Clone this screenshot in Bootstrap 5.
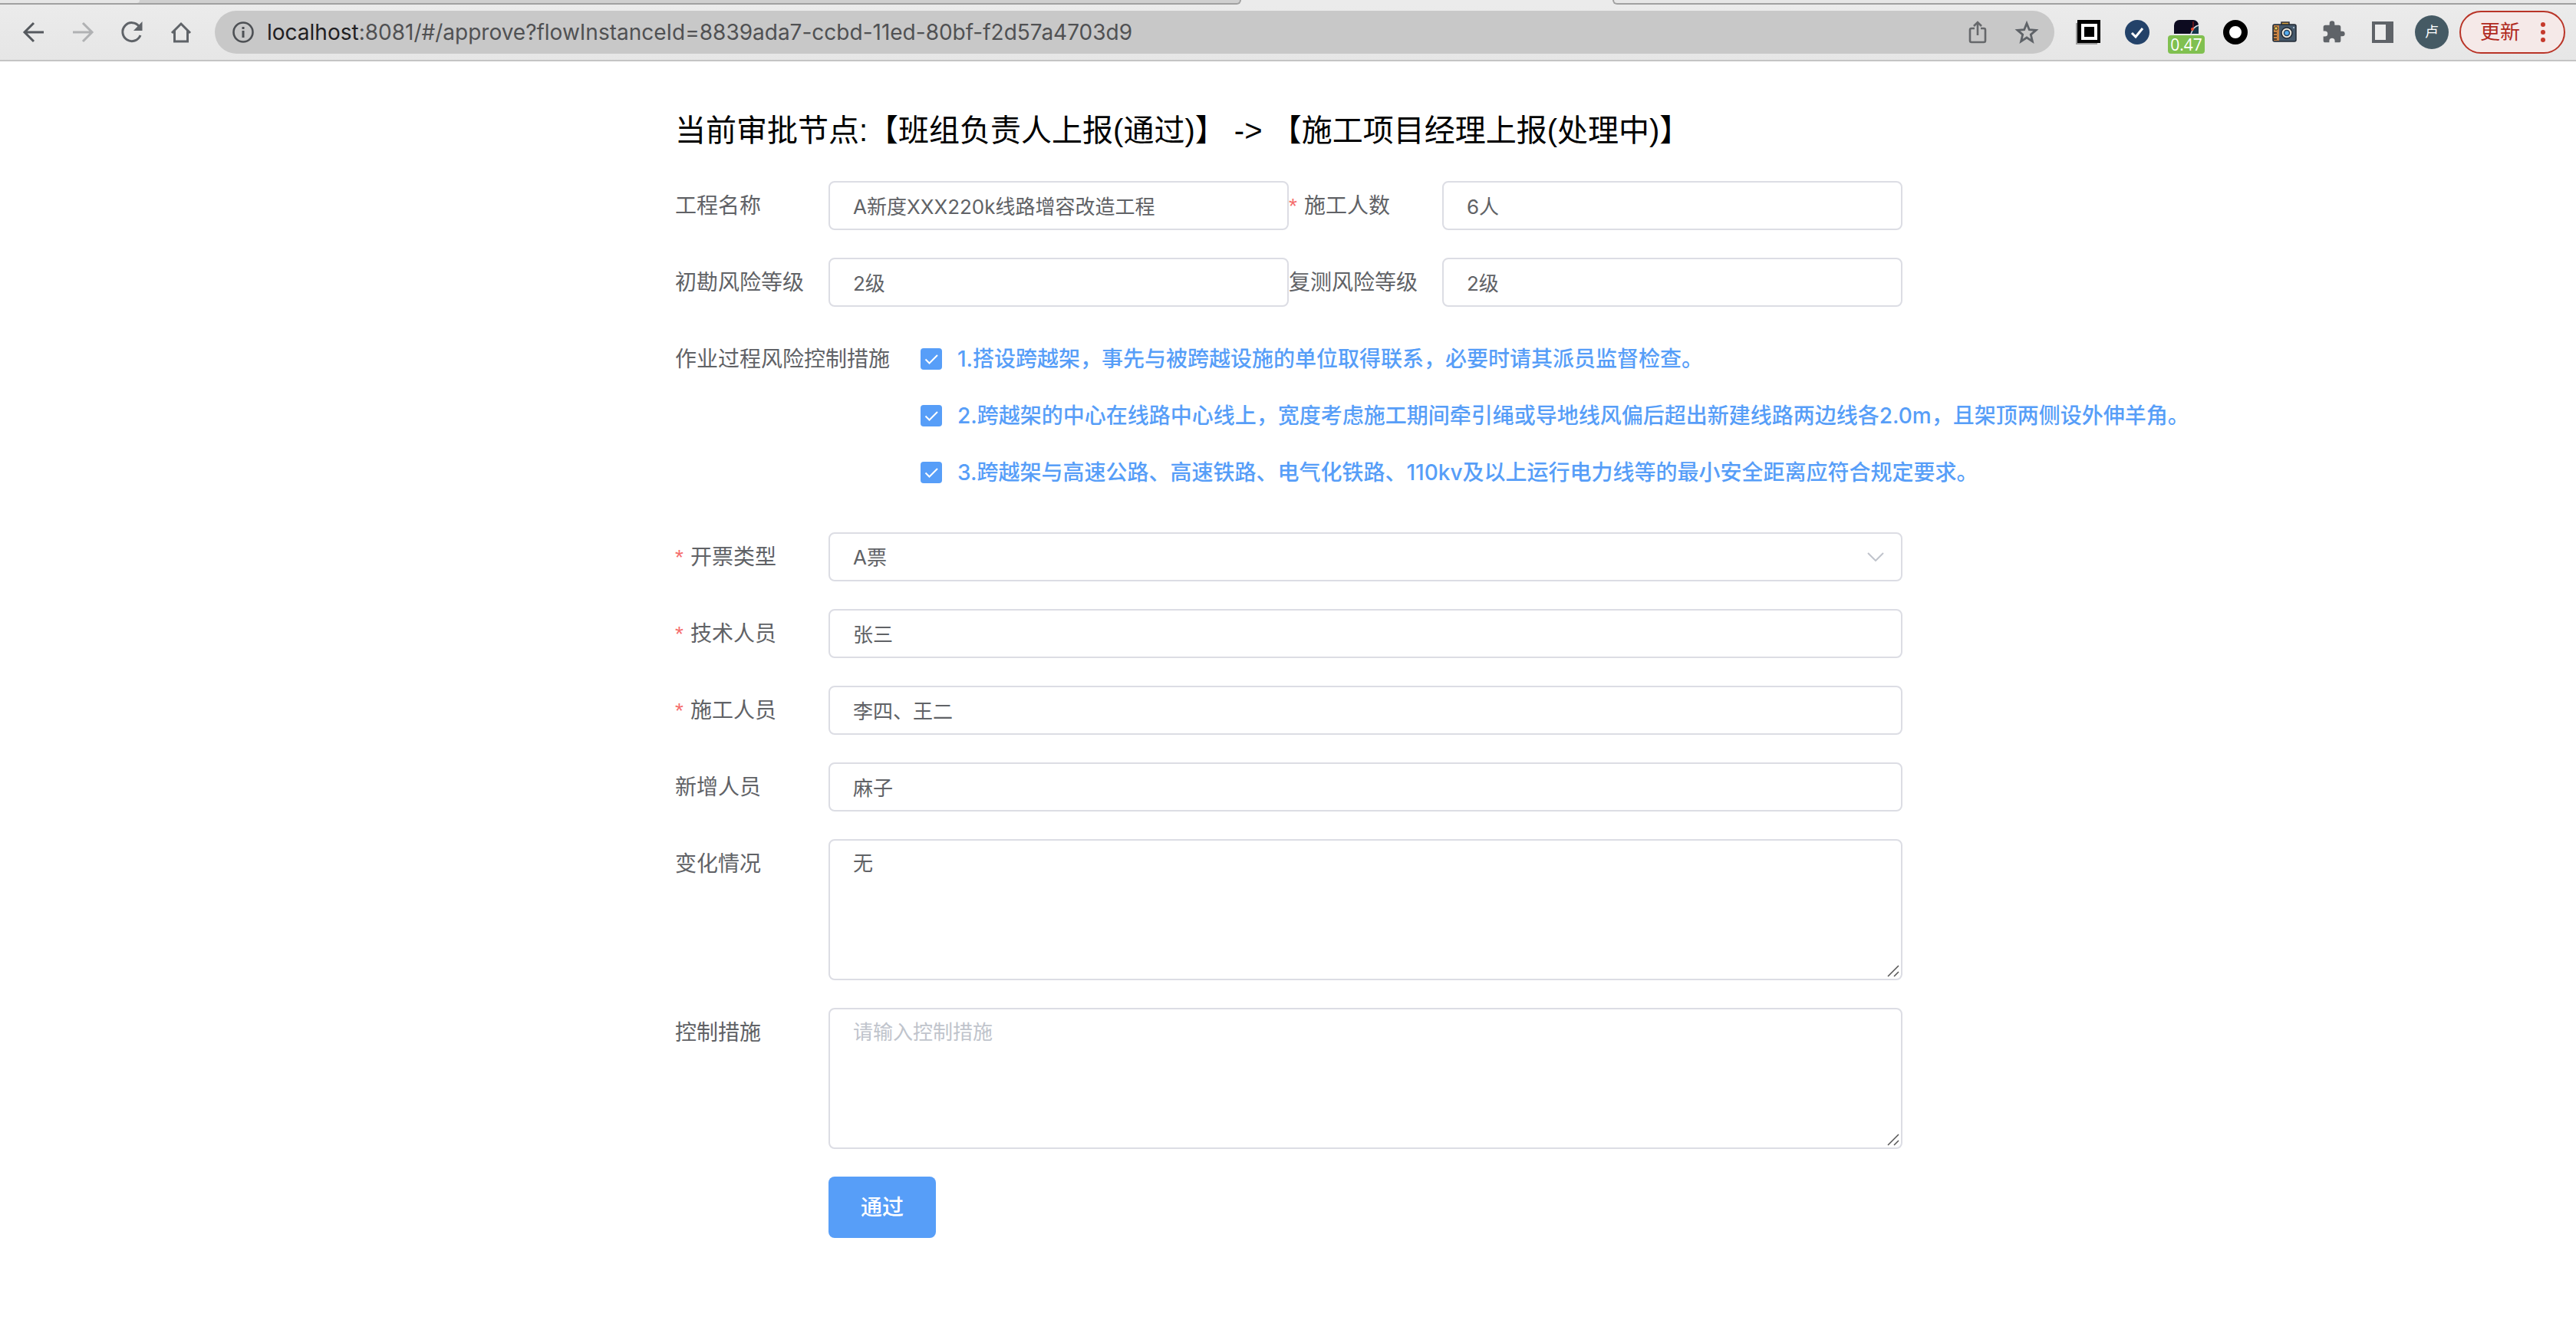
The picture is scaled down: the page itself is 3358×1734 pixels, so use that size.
<!DOCTYPE html>
<html lang="zh-CN">
<head>
<meta charset="utf-8">
<meta name="viewport" content="width=device-width, initial-scale=1">
<title>审批</title>
<link href="https://cdn.jsdelivr.net/npm/bootstrap@5.3.0/dist/css/bootstrap.min.css" rel="stylesheet">
<style>
  body { font-family: Inter, "Noto Sans CJK SC", sans-serif; font-size: 28px; line-height: 64px; color: #606266; background: #fff; }

  /* Browser chrome */
  .tab-strip { height: 6px; background: #ebebeb; }
  .tab-strip > div { flex-basis: 0; }
  .tabs-left { flex-grow: 1618; background: #cfcfcf; border-bottom: 2px solid #a0a0a0; border-right: 2px solid #a0a0a0; border-bottom-right-radius: 8px; }
  .tabs-first { width: 182px; height: 4px; background: #e6e6e6; border-bottom-right-radius: 4px; }
  .tabs-active { flex-grow: 484; }
  .tabs-right { flex-grow: 1256; background: #e6e6e6; border-bottom: 2px solid #a0a0a0; border-left: 2px solid #a0a0a0; border-bottom-left-radius: 8px; }
  .toolbar { height: 74px; padding: 0 14px 0 12px; background: linear-gradient(#ebebeb, #e6e6e6); border-bottom: 2px solid #c4c4c4; }
  .tool-btn { width: 64px; height: 64px; padding: 0; border: 0; background: none; color: #5f6368; display: flex; align-items: center; justify-content: center; flex: none; }
  .tool-btn svg, .omnibox svg { display: block; overflow: visible; }
  .omnibox { height: 56px; margin: 0 12px; padding: 0 4px 0 22px; border-radius: 28px; background: #c8c8c8; }
  .url-text { margin-left: 16px; font-size: 28px; line-height: 40px; color: #505153; white-space: nowrap; }
  .url-text b { font-weight: 400; color: #1f2023; }
  .ext-count { top: 36px; left: 8px; width: 48px; height: 24px; border-radius: 4px; background: #80c050; color: #fff; font: 21px/24px "Open Sans", sans-serif; }
  .avatar { width: 44px; height: 44px; border-radius: 50%; background: #455a64; color: #fff; font-size: 18px; line-height: 44px; }
  .update-btn { width: 138px; height: 56px; margin-left: 4px; padding: 0 24px 0 25px; border: 2px solid #b93427; border-radius: 28px; background: #f5e9e8; color: #b02a1e; font-size: 26px; line-height: 40px; }

  /* Approval form */
  .approve-page { max-width: 1602px; padding: 66px 0 0 2px; }
  .node-title { margin: 0 0 42px; font-family: "Liberation Sans", "Noto Sans CJK SC", sans-serif; font-size: 40px; line-height: 48px; font-weight: 400; color: #000; white-space: nowrap; }
  .field { display: flex; align-items: flex-start; margin-bottom: 36px; }
  .field-label { flex: none; width: 200px; height: 64px; white-space: nowrap; }
  .field-label.wide { width: 320px; }
  .req::before { content: "*"; color: #f56c6c; margin-right: 9px; font-family: "Liberation Sans", sans-serif; line-height: 1; }
  .field .form-control, .field .form-select { height: 64px; padding: 0 30px 2px; border: 2px solid #dcdde4; border-radius: 8px; font-size: 26px; line-height: 39px; color: #606266; background-color: #fff; }
  .field .form-select { padding-bottom: 0; background-image: url("data:image/svg+xml,%3Csvg xmlns='http://www.w3.org/2000/svg' viewBox='0 0 22 12'%3E%3Cpath d='M1 1l10 10L21 1' fill='none' stroke='%23c0c4cc' stroke-width='2'/%3E%3C/svg%3E"); background-size: 22px 12px; background-position: right 22px center; }
  .field textarea.form-control { height: 184px; padding: 10px 30px; resize: none; background: #fff url("data:image/svg+xml,%3Csvg xmlns='http://www.w3.org/2000/svg' viewBox='0 0 16 16'%3E%3Cpath d='M1 15L15 1M9 15l6-6' fill='none' stroke='%23555' stroke-width='1.5'/%3E%3C/svg%3E") no-repeat right 2px bottom 2px / 16px 16px; }
  .field .form-control::placeholder { color: #c0c4cc; opacity: 1; }
  .measure { height: 64px; margin-bottom: 10px; font-weight: 500; color: #579ef8; white-space: nowrap; }
  .measure .form-check-input { flex: none; width: 28px; height: 28px; margin: 0 20px 0 0; border: 0; border-radius: 4px; background-color: #579ef8; background-size: 28px 28px; background-image: url("data:image/svg+xml,%3Csvg xmlns='http://www.w3.org/2000/svg' viewBox='0 0 28 28'%3E%3Cpath d='M6.500 14.500l5 5L22 9' fill='none' stroke='white' stroke-width='2'/%3E%3C/svg%3E"); }
  .pass-btn { width: 140px; height: 80px; padding: 0; border: 0; border-radius: 8px; background: #579ef8; font-size: 28px; font-weight: 500; }
</style>
<script src="https://cdn.jsdelivr.net/npm/bootstrap@5.3.0/dist/js/bootstrap.bundle.min.js"></script>
</head>
<body>
<header>
  <div class="tab-strip d-flex">
    <div class="tabs-left"><div class="tabs-first"></div></div>
    <div class="tabs-active"></div>
    <div class="tabs-right"></div>
  </div>
  <nav class="toolbar d-flex align-items-center">
    <button class="tool-btn" aria-label="后退"><svg width="28" height="28" viewBox="0 0 28 28" fill="none" stroke="#55595e" stroke-width="3"><path d="M27 14H3M14 2L2 14l12 12"/></svg></button>
    <button class="tool-btn" aria-label="前进"><svg width="28" height="28" viewBox="0 0 28 28" fill="none" stroke="#b0b1b3" stroke-width="3"><path d="M1 14h24M14 2l12 12-12 12"/></svg></button>
    <button class="tool-btn" aria-label="刷新"><svg width="28" height="28" viewBox="0 0 28 28"><path d="M23.500 6.500A12 12 0 1 0 25 18" fill="none" stroke="#5f6368" stroke-width="3"/><path d="M27.500 0v12H16z" fill="#5f6368"/></svg></button>
    <button class="tool-btn" aria-label="主页"><svg width="28" height="28" viewBox="0 0 28 28" fill="none" stroke="#5f6368" stroke-width="3"><path d="M2 15L14 3l12 12M5.500 12v14h17V12"/></svg></button>
    <div class="omnibox d-flex align-items-center flex-grow-1">
      <svg width="30" height="30" viewBox="0 0 30 30"><circle cx="15" cy="15" r="12.500" fill="none" stroke="#4d5054" stroke-width="2.600"/><path d="M13.500 8h3v3h-3zM13.500 13h3v9h-3z" fill="#4d5054"/></svg>
      <div class="url-text flex-grow-1" role="textbox" aria-label="地址"><b>localhost</b>:8081/#/approve?flowInstanceId=8839ada7-ccbd-11ed-80bf-f2d57a4703d9</div>
      <button class="tool-btn" aria-label="分享"><svg width="24" height="30" viewBox="0 0 24 30" fill="none" stroke="#66686b" stroke-width="2.600"><path d="M8 10H4a2 2 0 0 0-2 2v14a2 2 0 0 0 2 2h16a2 2 0 0 0 2-2V12a2 2 0 0 0-2-2h-4M12 19V2M7 7l5-5 5 5"/></svg></button>
      <button class="tool-btn" aria-label="收藏"><svg width="30" height="30" viewBox="0 0 30 30" fill="none" stroke="#5f6368" stroke-width="2.800"><path d="M15 3.500l3.300 8.200 8.700.7-6.700 5.700 2.100 8.700L15 22l-7.400 4.800 2.100-8.700L3 12.400l8.700-.7z"/></svg></button>
    </div>
    <button class="tool-btn" aria-label="扩展 1"><svg width="32" height="32" viewBox="0 0 32 32"><path d="M0 4h28v28H0z" fill="#9a9a9a"/><path d="M2 0h30v30H2z" fill="#000"/><path d="M7 5h21v21H7z" fill="#fff"/><path d="M11 9h13v13H11z" fill="#000"/></svg></button>
    <button class="tool-btn" aria-label="扩展 2"><svg width="32" height="32" viewBox="0 0 32 32"><circle cx="16" cy="16" r="16" fill="#234269"/><path d="M9 17l5 5 9-11" fill="none" stroke="#fff" stroke-width="3"/></svg></button>
    <button class="tool-btn position-relative" aria-label="扩展 3"><svg width="32" height="32" viewBox="0 0 32 32"><path d="M0 18V7a7 7 0 0 1 7-7h18a7 7 0 0 1 7 7v11z" fill="#0d0b20"/><path d="M25 2v10" stroke="#7c1d1d" stroke-width="1.500"/><path d="M22 18c2-6 5-10 10-11v11z" fill="#14364a"/><path d="M22 18c2-6 5-10 10-11" fill="none" stroke="#d9dde2" stroke-width="1.500"/><circle cx="24" cy="12" r="2" fill="#f04a2c"/></svg><span class="ext-count position-absolute">0.47</span></button>
    <button class="tool-btn" aria-label="扩展 4"><svg width="32" height="32" viewBox="0 0 32 32"><circle cx="16" cy="16" r="12" fill="#fff" stroke="#000" stroke-width="8"/></svg></button>
    <button class="tool-btn" aria-label="扩展 5"><svg width="32" height="28" viewBox="0 0 32 28"><path d="M12 4V1h10v3" fill="#d9a441" stroke="#2b2b33" stroke-width="1.500"/><rect x="1" y="4" width="30" height="22" rx="2" fill="#45596b" stroke="#222a35" stroke-width="1.500"/><path d="M2 5h7v20H2z" fill="#c98343"/><path d="M2 15h4M2 19h4M2 23h4" stroke="#222" stroke-width="1.500"/><circle cx="5" cy="9" r="2.200" fill="#f4d45c" stroke="#222"/><circle cx="19" cy="15" r="7" fill="#efe9dc" stroke="#222a35" stroke-width="1.500"/><circle cx="19" cy="15" r="3.500" fill="#55aef0" stroke="#25405c" stroke-width="1.500"/><circle cx="28" cy="8" r="1" fill="#bcd"/></svg></button>
    <button class="tool-btn" aria-label="扩展程序"><svg width="32" height="32" viewBox="0 0 24 24" fill="#5f6368"><path d="M20.500 11H19V7a2 2 0 0 0-2-2h-4V3.500a2.500 2.500 0 0 0-5 0V5H4a2 2 0 0 0-2 2v3.800h1.500a2.700 2.700 0 0 1 0 5.400H2V20a2 2 0 0 0 2 2h3.800v-1.500a2.700 2.700 0 0 1 5.400 0V22H17a2 2 0 0 0 2-2v-4h1.500a2.500 2.500 0 0 0 0-5z"/></svg></button>
    <button class="tool-btn" aria-label="侧边栏"><svg width="28" height="28" viewBox="0 0 28 28"><path d="M0 0h28v28H0z" fill="#5f6368"/><path d="M4 4h14v20H4z" fill="#ececec"/></svg></button>
    <button class="tool-btn" aria-label="用户"><span class="avatar">卢</span></button>
    <button class="update-btn d-flex align-items-center justify-content-between">更新<svg width="6" height="28" viewBox="0 0 6 28" fill="#c5392b"><circle cx="3" cy="4" r="3"/><circle cx="3" cy="14" r="3"/><circle cx="3" cy="24" r="3"/></svg></button>
  </nav>
</header>

<main class="approve-page mx-auto">
  <h1 class="node-title">当前审批节点:【班组负责人上报(通过)】 -&gt; 【施工项目经理上报(处理中)】</h1>
  <form>
    <div class="row g-0">
      <div class="col-6 field"><label class="field-label" for="project">工程名称</label><input class="form-control" id="project" value="A新度XXX220k线路增容改造工程"></div>
      <div class="col-6 field"><label class="field-label req" for="count">施工人数</label><input class="form-control" id="count" value="6人"></div>
      <div class="col-6 field"><label class="field-label" for="risk1">初勘风险等级</label><input class="form-control" id="risk1" value="2级"></div>
      <div class="col-6 field"><label class="field-label" for="risk2">复测风险等级</label><input class="form-control" id="risk2" value="2级"></div>
    </div>
    <div class="field" role="group" aria-labelledby="measures">
      <span class="field-label wide" id="measures">作业过程风险控制措施</span>
      <div>
        <div class="measure d-flex align-items-center"><input class="form-check-input" type="checkbox" id="m1" checked><label for="m1">1.搭设跨越架，事先与被跨越设施的单位取得联系，必要时请其派员监督检查。</label></div>
        <div class="measure d-flex align-items-center"><input class="form-check-input" type="checkbox" id="m2" checked><label for="m2">2.跨越架的中心在线路中心线上，宽度考虑施工期间牵引绳或导地线风偏后超出新建线路两边线各2.0m，且架顶两侧设外伸羊角。</label></div>
        <div class="measure d-flex align-items-center"><input class="form-check-input" type="checkbox" id="m3" checked><label for="m3">3.跨越架与高速公路、高速铁路、电气化铁路、110kv及以上运行电力线等的最小安全距离应符合规定要求。</label></div>
      </div>
    </div>
    <div class="field"><label class="field-label req" for="ticket">开票类型</label><select class="form-select" id="ticket"><option>A票</option></select></div>
    <div class="field"><label class="field-label req" for="tech">技术人员</label><input class="form-control" id="tech" value="张三"></div>
    <div class="field"><label class="field-label req" for="worker">施工人员</label><input class="form-control" id="worker" value="李四、王二"></div>
    <div class="field"><label class="field-label" for="added">新增人员</label><input class="form-control" id="added" value="麻子"></div>
    <div class="field"><label class="field-label" for="change">变化情况</label><textarea class="form-control" id="change">无</textarea></div>
    <div class="field"><label class="field-label" for="control">控制措施</label><textarea class="form-control" id="control" placeholder="请输入控制措施"></textarea></div>
    <div class="field"><span class="field-label"></span><button type="button" class="btn btn-primary pass-btn">通过</button></div>
  </form>
</main>
</body>
</html>
